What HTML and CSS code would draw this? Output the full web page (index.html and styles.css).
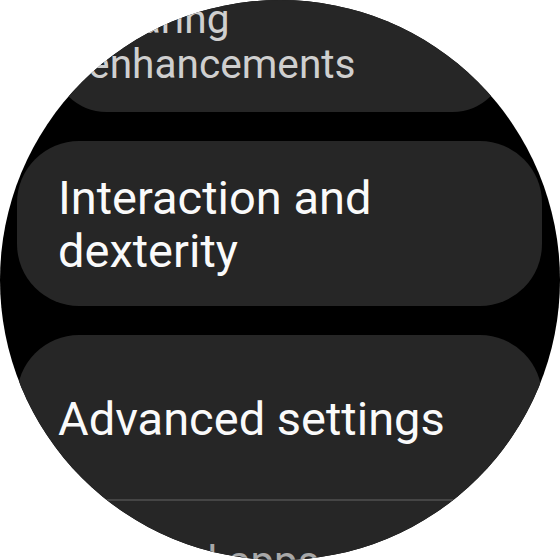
FILE: index.html
```html
<!DOCTYPE html>
<html lang="en">
<head>
<meta charset="utf-8">
<title>Accessibility</title>
<link rel="stylesheet" href="styles.css">
</head>
<body>
<div class="screen">
  <div class="list">
    <div class="card card-scaled">
      <div class="title">Hearing enhancements</div>
    </div>
    <div class="card">
      <div class="title">Interaction and dexterity</div>
    </div>
    <div class="card card-group">
      <div class="item">
        <div class="title">Advanced settings</div>
      </div>
      <div class="divider"></div>
      <div class="item item-sub">
        <div class="title sub">Installed apps</div>
      </div>
    </div>
  </div>
</div>
</body>
</html>
```
FILE: styles.css
```css
html, body {
  margin: 0;
  padding: 0;
  background: #ffffff;
}
body {
  width: 560px;
  height: 560px;
  overflow: hidden;
  font-family: Roboto, "Noto Sans", "Liberation Sans", sans-serif;
}
.screen {
  width: 560px;
  height: 560px;
  border-radius: 50%;
  overflow: hidden;
  background: #000000;
}
.list {
  display: flex;
  flex-direction: column;
  gap: 29px;
  margin-top: -53px;
  padding: 0 18px 0 17px;
}
.card {
  background: #262626;
  border-radius: 62px;
  padding: 30px 30px 29px 41px;
}
.card-scaled {
  transform: scale(0.864);
  transform-origin: 50% 100%;
}
.card-scaled .title {
  color: #cfcfcf;
}
.title {
  color: #fafafa;
  font-size: 47px;
  line-height: 53px;
  letter-spacing: 0;
}
.card-group {
  padding: 0;
  height: 260px;
  border-radius: 62px 62px 0 0;
}
.item {
  padding: 57px 30px 54px 41px;
}
.divider {
  height: 2px;
  background: #454545;
  margin: 0 20px;
}
.item-sub {
  padding: 34px 30px 0 41px;
}
.sub {
  color: #a8a8a8;
  font-size: 42px;
}
```
